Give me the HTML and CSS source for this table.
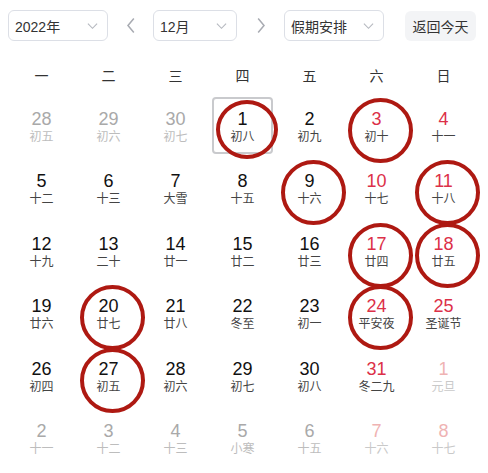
FILE: index.html
```html
<!DOCTYPE html>
<html lang="zh-CN">
<head>
<meta charset="utf-8">
<link rel="stylesheet" href="styles.css">
</head>
<body>
<div class="page">
  <div class="toolbar">
    <div class="select sel-year"><span>2022年</span><svg class="chev" viewBox="0 0 12 8"><path d="M1 1.5 L6 6.5 L11 1.5" /></svg></div>
    <div class="nav"><svg viewBox="0 0 10 18"><path d="M8 1.5 L1.8 9 L8 16.5" /></svg></div>
    <div class="select sel-month"><span>12月</span><svg class="chev" viewBox="0 0 12 8"><path d="M1 1.5 L6 6.5 L11 1.5" /></svg></div>
    <div class="nav nav-r"><svg viewBox="0 0 10 18"><path d="M2 1.5 L8.2 9 L2 16.5" /></svg></div>
    <div class="select sel-holiday"><span>假期安排</span><svg class="chev" viewBox="0 0 12 8"><path d="M1 1.5 L6 6.5 L11 1.5" /></svg></div>
    <button class="today-btn">返回今天</button>
  </div>

  <div class="weekdays">
    <div>一</div><div>二</div><div>三</div><div>四</div><div>五</div><div>六</div><div>日</div>
  </div>

  <div class="grid">
    <div class="cell other"><span class="num">28</span><span class="lunar">初五</span></div>
    <div class="cell other"><span class="num">29</span><span class="lunar">初六</span></div>
    <div class="cell other"><span class="num">30</span><span class="lunar">初七</span></div>
    <div class="cell today mark"><span class="num">1</span><span class="lunar">初八</span></div>
    <div class="cell"><span class="num">2</span><span class="lunar">初九</span></div>
    <div class="cell red mark"><span class="num">3</span><span class="lunar">初十</span></div>
    <div class="cell red"><span class="num">4</span><span class="lunar">十一</span></div>

    <div class="cell"><span class="num">5</span><span class="lunar">十二</span></div>
    <div class="cell"><span class="num">6</span><span class="lunar">十三</span></div>
    <div class="cell"><span class="num">7</span><span class="lunar">大雪</span></div>
    <div class="cell"><span class="num">8</span><span class="lunar">十五</span></div>
    <div class="cell mark"><span class="num">9</span><span class="lunar">十六</span></div>
    <div class="cell red"><span class="num">10</span><span class="lunar">十七</span></div>
    <div class="cell red mark"><span class="num">11</span><span class="lunar">十八</span></div>

    <div class="cell"><span class="num">12</span><span class="lunar">十九</span></div>
    <div class="cell"><span class="num">13</span><span class="lunar">二十</span></div>
    <div class="cell"><span class="num">14</span><span class="lunar">廿一</span></div>
    <div class="cell"><span class="num">15</span><span class="lunar">廿二</span></div>
    <div class="cell"><span class="num">16</span><span class="lunar">廿三</span></div>
    <div class="cell red mark"><span class="num">17</span><span class="lunar">廿四</span></div>
    <div class="cell red mark"><span class="num">18</span><span class="lunar">廿五</span></div>

    <div class="cell"><span class="num">19</span><span class="lunar">廿六</span></div>
    <div class="cell mark"><span class="num">20</span><span class="lunar">廿七</span></div>
    <div class="cell"><span class="num">21</span><span class="lunar">廿八</span></div>
    <div class="cell"><span class="num">22</span><span class="lunar">冬至</span></div>
    <div class="cell"><span class="num">23</span><span class="lunar">初一</span></div>
    <div class="cell red mark"><span class="num">24</span><span class="lunar">平安夜</span></div>
    <div class="cell red"><span class="num">25</span><span class="lunar">圣诞节</span></div>

    <div class="cell"><span class="num">26</span><span class="lunar">初四</span></div>
    <div class="cell mark"><span class="num">27</span><span class="lunar">初五</span></div>
    <div class="cell"><span class="num">28</span><span class="lunar">初六</span></div>
    <div class="cell"><span class="num">29</span><span class="lunar">初七</span></div>
    <div class="cell"><span class="num">30</span><span class="lunar">初八</span></div>
    <div class="cell red"><span class="num">31</span><span class="lunar">冬二九</span></div>
    <div class="cell other red"><span class="num">1</span><span class="lunar">元旦</span></div>

    <div class="cell other"><span class="num">2</span><span class="lunar">十一</span></div>
    <div class="cell other"><span class="num">3</span><span class="lunar">十二</span></div>
    <div class="cell other"><span class="num">4</span><span class="lunar">十三</span></div>
    <div class="cell other"><span class="num">5</span><span class="lunar">小寒</span></div>
    <div class="cell other"><span class="num">6</span><span class="lunar">十五</span></div>
    <div class="cell other red"><span class="num">7</span><span class="lunar">十六</span></div>
    <div class="cell other red"><span class="num">8</span><span class="lunar">十七</span></div>
  </div>
</div>
</body>
</html>
```

FILE: styles.css
```css
* { box-sizing: border-box; }
html, body { margin: 0; padding: 0; background: #fff; }
body {
  font-family: "Liberation Sans", "Noto Sans CJK SC", sans-serif;
  color: #333;
}
.page {
  width: 488px;
  height: 473px;
  padding: 10px 12px 0 8px;
  overflow: hidden;
}
.toolbar {
  display: flex;
  align-items: center;
  height: 31px;
}
.select {
  height: 31px;
  border: 1px solid #dcdfe6;
  border-radius: 6px;
  display: flex;
  align-items: center;
  justify-content: space-between;
  padding: 0 9px 0 6px;
  font-size: 14px;
  color: #333;
  font-family: "Liberation Sans", "Noto Sans CJK SC", sans-serif;
}
.sel-year { width: 100px; }
.sel-month { width: 84px; }
.sel-holiday { width: 100px; }
.chev { width: 11px; height: 8px; }
.chev path { fill: none; stroke: #b5b8bf; stroke-width: 1.2; }
.nav {
  width: 45px;
  display: flex;
  justify-content: center;
  align-items: center;
}
.nav-r { width: 47px; }
.nav svg { width: 10px; height: 17px; }
.nav path { fill: none; stroke: #a8abb2; stroke-width: 1.6; }
.today-btn {
  margin-left: auto;
  width: 71px;
  height: 30px;
  border: none;
  border-radius: 6px;
  background: #f3f4f6;
  color: #333;
  font-size: 14px;
  font-family: "Noto Sans CJK SC", sans-serif;
  padding: 0;
}
.weekdays {
  display: grid;
  grid-template-columns: repeat(7, 61px);
  column-gap: 6px;
  margin: 24px 0 0 3px;
  height: 20px;
  line-height: 20px;
  font-size: 14px;
  color: #333;
  text-align: center;
  font-family: "Noto Sans CJK SC", sans-serif;
}
.grid {
  display: grid;
  grid-template-columns: repeat(7, 61px);
  grid-auto-rows: 57px;
  column-gap: 6px;
  row-gap: 5.6px;
  margin: 12px 0 0 3px;
}
.cell {
  position: relative;
  display: flex;
  flex-direction: column;
  align-items: center;
  justify-content: center;
  padding-bottom: 1px;
}
.num {
  font-size: 18px;
  line-height: 20px;
  color: #111;
  font-family: "Liberation Sans", sans-serif;
}
.lunar {
  font-size: 12px;
  line-height: 12px;
  margin-top: 1px;
  color: #444;
  font-family: "Noto Sans CJK SC", sans-serif;
}
.red .num { color: #dc3048; }
.other .num { color: #a9a9a9; }
.other .lunar { color: #bdbdbd; }
.other.red .num { color: #efb3b3; }
.other.red .lunar { color: #c9c9c9; }
.today {
  border: 2px solid #c9cacd;
  border-radius: 4px;
}
.mark::after {
  content: "";
  position: absolute;
  left: 50%;
  top: 50%;
  width: 57px;
  height: 57px;
  margin: -28px 0 0 -28.5px;
  border: 4px solid #ae1912;
  border-radius: 50%;
}
.today.mark::after {
  width: 54px;
  height: 51px;
  margin: -25.5px 0 0 -27px;
}
```
